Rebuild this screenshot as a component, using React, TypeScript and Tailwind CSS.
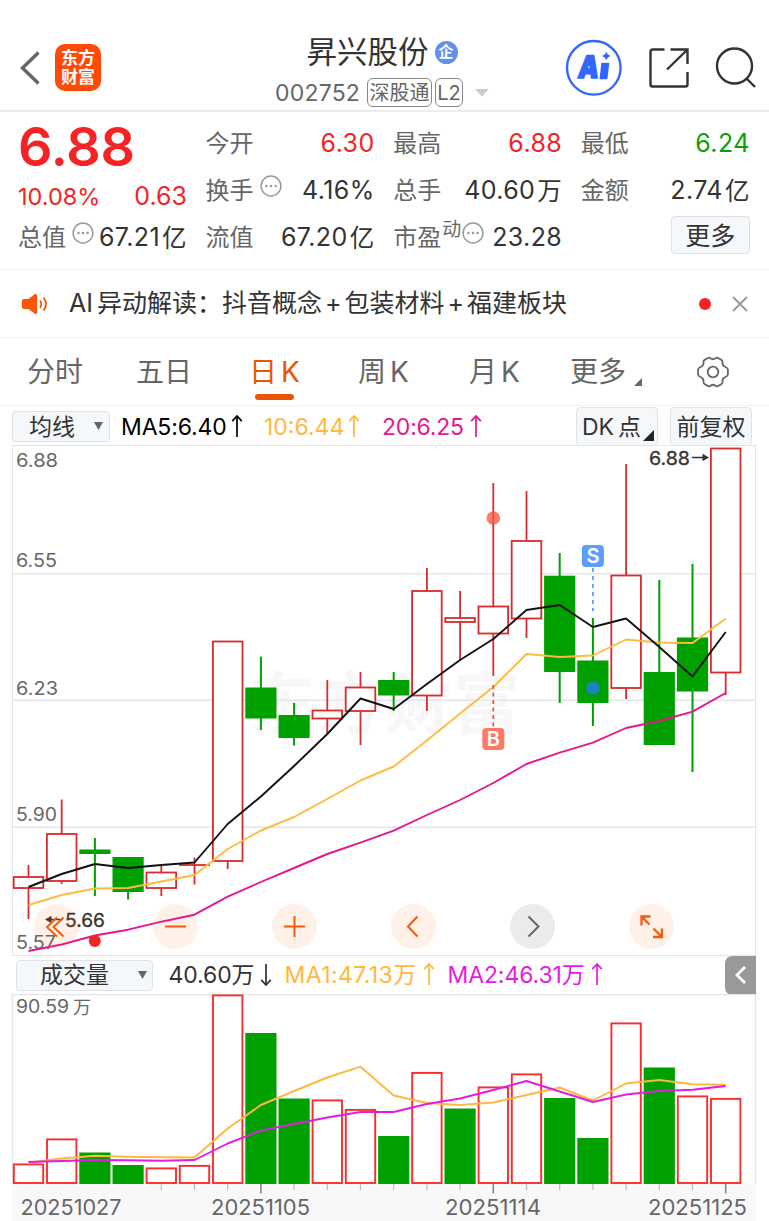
import type { ReactNode } from 'react'

type Candle = { top: number; bottom: number; high: number; low: number; up: boolean; vol: number; volUp: boolean }

const STEP = 33.2
const cx = (i: number) => 28.5 + STEP * i

// top / bottom of the body, high / low of the wick, up?, top of the volume bar, volume up?
const rows: [number, number, number, number, boolean, number, boolean][] = [
  [877, 888, 865, 919, true, 1164, true],
  [834, 881, 799.5, 884, true, 1139, true],
  [849.5, 854, 838, 896, false, 1152.5, false],
  [857, 892, 857, 899.5, false, 1165, false],
  [872.5, 888, 865, 896, true, 1168, true],
  [865, 865, 857.5, 884.5, true, 1165.5, true],
  [641.5, 861, 641.5, 869, true, 995, true],
  [687.5, 718.5, 656.7, 730, false, 1033, false],
  [715, 738, 703, 745.5, false, 1098.5, false],
  [710.5, 718.5, 680, 734, true, 1100, true],
  [687.5, 711, 672, 745, true, 1109.5, true],
  [680, 695.5, 672, 711, false, 1136, false],
  [591, 695.5, 568, 711, true, 1072.5, true],
  [618, 622, 591, 660, true, 1108.5, false],
  [606.5, 633.5, 483, 676, true, 1087, true],
  [541, 618.5, 491, 638, true, 1074, true],
  [575.7, 672, 553, 703, false, 1098, false],
  [660.5, 703, 618, 726, false, 1138, false],
  [575.5, 688, 464, 699, true, 1023, true],
  [672, 745, 580, 745, false, 1067.5, false],
  [637.5, 691.5, 564, 772, false, 1096, true],
  [448.5, 672.5, 448.5, 695, true, 1098.5, true],
]

const candles: Candle[] = rows.map(([top, bottom, high, low, up, vol, volUp]) => ({ top, bottom, high, low, up, vol, volUp }))

const ma5 = [887, 874, 864, 868, 865, 862.5, 824, 796.5, 766, 734, 698.5, 709, 684, 660, 639, 610, 605, 627, 618.5, 647, 676.5, 632]
const ma10 = [905, 895, 888.5, 888, 881.5, 875, 849, 830.5, 817, 799, 780.5, 766.5, 740.5, 713.5, 687, 654, 657, 655.5, 639.5, 642.5, 643, 618.5]
const ma20 = [951, 944.5, 935.5, 929.7, 921.7, 914.7, 896.7, 882, 868, 854, 842.7, 830.7, 815, 800, 783, 764, 752.7, 742.7, 728, 721, 711.7, 693]
const vma1 = [1162.5, 1158.5, 1155.7, 1156.7, 1157.2, 1157.5, 1128.5, 1105, 1091, 1077.5, 1066.7, 1095.5, 1103, 1105, 1102.5, 1095, 1087.5, 1100.5, 1083.5, 1080, 1084.3, 1084.7]
const vma2 = [1162, 1161, 1160, 1160.3, 1160.7, 1160, 1143.5, 1130.5, 1124, 1117.5, 1112, 1112, 1104, 1098.5, 1090, 1081, 1091.5, 1102, 1094.5, 1091, 1089.7, 1086]

const line = (ys: number[]) => ys.map((y, i) => `${cx(i)},${y}`).join(' ')

const Arrow = ({ down }: { down?: boolean }) => (
  <svg width="12" height="24" viewBox="0 0 12 24" fill="none" stroke="currentColor" strokeWidth="1.7" className={down ? 'rotate-180' : '-mt-[2px]'}>
    <path d="M6 23V2M1.2 7.2 6 2l4.8 5.2" />
  </svg>
)

const Dots = () => (
  <svg width="22" height="22" viewBox="0 0 22 22" className="shrink-0">
    <circle cx="11" cy="11" r="9.9" fill="none" stroke="#999" strokeWidth="1.5" />
    <circle cx="6.4" cy="11" r="1.3" fill="#999" />
    <circle cx="11" cy="11" r="1.3" fill="#999" />
    <circle cx="15.6" cy="11" r="1.3" fill="#999" />
  </svg>
)

const Header = () => (
  <header className="flex h-[112px] border-b-2 border-[#ebebeb]">
    <div className="flex w-[275px] pl-[20px] pt-[44px]">
      <svg width="21" height="36" viewBox="0 0 21 36" fill="none" stroke="#666" strokeWidth="3.4" className="mt-[6px]">
        <path d="M18.5 2.5 2.500 18l16 15.500" />
      </svg>
      <div className="ml-[14px] h-[47px] w-[46px] rounded-[10px] bg-[#ff4a05] pt-[5px] text-center text-[17px] font-bold leading-[19px] text-white">
        东方
        <br />
        财富
      </div>
    </div>
    <div className="w-[290px] pt-[32px]">
      <div className="flex h-[40px] items-center pl-[31.500px] text-[30.500px] leading-[40px] text-[#333]">
        昇兴股份
        <span className="ml-[6px] flex size-[23px] items-center justify-center rounded-full bg-[#628fea] text-[15px] font-bold text-white">企</span>
      </div>
      <div className="mt-[6px] flex h-[29px] items-center text-[#666]">
        <span className="mt-[2px] w-[92px] text-[23px] tracking-[0.2px]">002752</span>
        <span className="flex h-[29px] w-[65px] items-center justify-center rounded-[6px] border border-[#888] pt-[1px] text-[20px]">深股通</span>
        <span className="ml-[3px] flex h-[29px] w-[28px] items-center justify-center rounded-[6px] border border-[#888] pt-[1px] text-[20px]">L2</span>
        <svg width="14" height="8" viewBox="0 0 14 8" className="ml-[12px]">
          <path d="M0 0h14L7 7.5z" fill="#ccc" />
        </svg>
      </div>
    </div>
    <svg width="58" height="58" viewBox="0 0 58 58" className="mt-[39px]" fill="#3366ff">
      <circle cx="28.8" cy="28.8" r="26.8" fill="none" stroke="#3366ff" strokeWidth="2.400" />
      <text x="12.500" y="39" fontSize="31" fontWeight="900" fontFamily="Inter" textLength="20.500" lengthAdjust="spacingAndGlyphs" stroke="#3366ff" strokeWidth="1.600" strokeLinejoin="round" transform="translate(4.600 0) skewX(-7)">A</text>
      <path d="M37 24.500h6.500l-1.700 15h-6.500z" stroke="#3366ff" strokeWidth="1.400" strokeLinejoin="round" />
      <path d="M41.300 12.800l1.500 2.800 3 1.300-3 1.500-1.500 2.900-1.500-2.900-3-1.500 3-1.300z" />
    </svg>
    <svg width="42" height="42" viewBox="0 0 42 42" className="ml-[25px] mt-[47px]" fill="none" stroke="#333" strokeWidth="2.400">
      <path d="M16.500 2.500H4.500Q2.500 2.500 2.500 4.500V37.500Q2.500 39.500 4.500 39.500H37.500Q39.500 39.500 39.500 37.500V25M22.500 2.500H39.500V17M39 3 19 22.500" />
    </svg>
    <svg width="44" height="44" viewBox="0 0 44 44" className="ml-[25px] mt-[46px]" fill="none" stroke="#333" strokeWidth="2.400">
      <circle cx="19.500" cy="20" r="17.500" />
      <path d="M31 32 40 41" />
    </svg>
  </header>
)

const Stat = ({ label, color = 'text-[#333]', children }: { label: ReactNode; color?: string; children: ReactNode }) => (
  <div className="flex h-[47px] w-[169px] items-center justify-between pt-[1px]">
    <span className="flex items-center text-[24px] text-[#666]">{label}</span>
    <span className={`flex items-center gap-[2px] whitespace-nowrap text-[25px] tracking-[0.4px] ${color}`}>{children}</span>
  </div>
)

const Quote = () => (
  <section className="flex h-[157px] gap-[18.600px] pl-[18px] pt-[8px]">
    <div className="w-[169px]">
      <div className="h-[53px] whitespace-nowrap text-[54px] font-semibold leading-[54px] tracking-[-0.200px] text-[#f52323]">6.88</div>
      <div className="flex h-[41px] items-center justify-between pt-[6px] text-[#f52323]">
        <span className="text-[23.500px]">10.08%</span>
        <span className="text-[25px]">0.63</span>
      </div>
      <Stat label={<>总值<span className="-mt-[10px] ml-[6px]"><Dots /></span></>}>
        <span>67.21</span><span className="text-[24.500px]">亿</span>
      </Stat>
    </div>
    <div>
      <Stat label="今开" color="text-[#f52323]">6.30</Stat>
      <Stat label={<>换手<span className="-mt-[11px] ml-[6px]"><Dots /></span></>}>4.16%</Stat>
      <Stat label="流值"><span>67.20</span><span className="text-[24.500px]">亿</span></Stat>
    </div>
    <div>
      <Stat label="最高" color="text-[#f52323]">6.88</Stat>
      <Stat label="总手"><span>40.60</span><span className="text-[24.500px]">万</span></Stat>
      <Stat label={<>市盈<span className="-mt-[15px] ml-[1px] text-[19px]">动</span><span className="-mt-[10px] ml-[1px]"><Dots /></span></>}>23.28</Stat>
    </div>
    <div>
      <Stat label="最低" color="text-[#0a9f0a]">6.24</Stat>
      <Stat label="金额"><span>2.74</span><span className="text-[24.500px]">亿</span></Stat>
      <div className="flex justify-end pt-[2px]">
        <button className="h-[38px] w-[79px] rounded-[4px] border border-[#dcdfe4] bg-[#f5f8fa] pt-[1px] text-[25px] leading-[36px] text-[#333]">更多</button>
      </div>
    </div>
  </section>
)

const Notice = () => (
  <section className="flex h-[69px] items-center border-y border-[#f2f2f2] pl-[22px] text-[#333]">
    <svg width="26" height="22" viewBox="0 0 26 22" className="mr-[21px]">
      <path d="M2 6h4.500L12.500 1.200Q15 0 15 2.500v17Q15 22 12.500 20.500L6.500 16H2Q0 16 0 14V8Q0 6 2 6z" fill="#ff5500" />
      <path d="M18 7.500q2.500 3.500 0 7.500M21.500 4.500q5 6.500 0 13" fill="none" stroke="#ff5500" strokeWidth="1.800" />
    </svg>
    <span className="flex w-[625px] items-center whitespace-nowrap pt-[1px] text-[25px]">
      <span className="mr-[4px]">AI</span><span className="w-[125px]">异动解读：</span>抖音概念
      <span className="mx-[3px]">+</span>包装材料<span className="mx-[3px]">+</span>福建板块
    </span>
    <span className="ml-[5px] size-[12px] rounded-full bg-[#f52323]" />
    <svg width="16" height="16" viewBox="0 0 16 16" className="ml-[20.500px]" stroke="#999" strokeWidth="1.900">
      <path d="m1 1 14 14M15 1 1 15" />
    </svg>
  </section>
)

const Tabs = () => (
  <nav className="flex h-[68px] items-center border-b border-[#f0f0f0] pt-[1px] text-[28px] text-[#666]">
    <span className="ml-[27px] w-[109px]">分时</span>
    <span className="w-[113px]">五日</span>
    <span className="relative flex w-[109px] gap-[4px] text-[#ea5504]">
      日<span>K</span>
      <i className="absolute left-[6px] top-[43px] h-[6px] w-[39px] rounded-full bg-[#ea5504]" />
    </span>
    <span className="flex w-[111px] gap-[4px]">周<span>K</span></span>
    <span className="flex w-[101px] gap-[4px]">月<span>K</span></span>
    <span>更多</span>
    <svg width="8" height="8" viewBox="0 0 8 8" className="ml-[8px] mt-[20px]">
      <path d="M8 0v8H0z" fill="#666" />
    </svg>
    <svg width="34" height="32" viewBox="0 0 34 32" className="-mt-[1px] ml-[54px]" fill="none" stroke="#666" strokeWidth="1.800">
      <circle cx="17" cy="16" r="5.300" />
      <path d="M11.500 2.200Q13 1 14.500 2.300Q17 4.200 19.500 2.300Q21 1 22.500 2.200L25 3.600Q26.800 4.500 26.500 6.500Q26.200 9.800 29.500 11Q31.800 12 31.900 13.500V18.500Q31.800 20 29.500 21Q26.200 22.200 26.500 25.500Q26.800 27.500 25 28.400L22.500 29.800Q21 31 19.500 29.700Q17 27.800 14.500 29.700Q13 31 11.500 29.800L9 28.400Q7.200 27.500 7.500 25.500Q7.800 22.200 4.500 21Q2.200 20 2.100 18.500V13.500Q2.200 12 4.500 11Q7.800 9.800 7.500 6.500Q7.200 4.500 9 3.600z" />
    </svg>
  </nav>
)

const box = 'rounded-[4px] border border-[#dfe3e8] bg-[#f5f8fa] text-[#333]'

const MaBar = () => (
  <div className="flex h-[39px] items-start pl-[12px] text-[23px]">
    <div className={`${box} mt-[5px] flex h-[31px] w-[98px] shrink-0 items-center pl-[16px] pt-[1px]`}>
      均线
      <svg width="9" height="8" viewBox="0 0 9 8" className="-mt-[2px] ml-[19px]">
        <path d="M0 0h9L4.500 8z" fill="#666" />
      </svg>
    </div>
    <div className="mt-[3px] flex h-[35px] items-center whitespace-nowrap pt-[1px]">
      <span className="ml-[11px] w-[110px] tracking-[-0.150px] text-black">MA5:6.40</span>
      <Arrow />
      <span className="ml-[21px] flex w-[84px] text-[#ffb83d]">10:6.44</span>
      <span className="text-[#ffb83d]"><Arrow /></span>
      <span className="ml-[22px] w-[88px] tracking-[-0.200px] text-[#e5178f]">20:6.25</span>
      <span className="text-[#e5178f]"><Arrow /></span>
    </div>
    <div className={`${box} ml-auto mt-[1px] flex h-[39px] w-[82px] shrink-0 items-center pl-[5px] pt-[1px]`}>
      <span className="mr-[4px]">DK</span>点
      <svg width="11" height="11" viewBox="0 0 11 11" className="ml-[2px] mt-[17px] shrink-0">
        <path d="M11 0v11H0z" fill="#222" />
      </svg>
    </div>
    <div className={`${box} ml-[12px] mr-[17px] mt-[1px] h-[39px] w-[82px] shrink-0 whitespace-nowrap pt-[1px] text-center leading-[37px]`}>前复权</div>
  </div>
)

const Label = ({ x, y, w, children, fill = '#666', size = 18 }: { x: number; y: number; w: number; children: string; fill?: string; size?: number }) => (
  <text x={x} y={y} fontSize={size} fill={fill} textLength={w} lengthAdjust="spacingAndGlyphs">{children}</text>
)

const PriceChart = () => (
  <svg width="769" height="511" viewBox="0 445 769 511" className="block">
    <rect x="12.500" y="445.500" width="743" height="510" fill="#fff" stroke="#e3e5ea" />
    <text x="248" y="728" fontSize="67" fontWeight="700" fill="#f7f7f7" textLength="272">东方财富</text>
    {[573.7, 700.3, 827.3].map((y) => (
      <line key={y} x1="12" x2="756" y1={y} y2={y} stroke="#e3e6ef" strokeWidth="1.600" />
    ))}
    <Label x={16} y={466.500} w={42}>6.88</Label>
    <Label x={16} y={566.800} w={41}>6.55</Label>
    <Label x={16} y={694.500} w={42}>6.23</Label>
    <Label x={16} y={821} w={41}>5.90</Label>
    <Label x={16} y={948.500} w={40}>5.57</Label>
    {candles.map((c, i) =>
      c.up ? (
        <g key={i} stroke="#d92b2e" strokeWidth="1.800">
          <line x1={cx(i)} x2={cx(i)} y1={c.high} y2={c.low} />
          {c.bottom > c.top ? (
            <rect x={cx(i) - 14.800} y={c.top} width="29.600" height={c.bottom - c.top} fill="#fff" />
          ) : (
            <line x1={cx(i) - 15.500} x2={cx(i) + 15.500} y1={c.top} y2={c.top} />
          )}
        </g>
      ) : (
        <g key={i} fill="#00a000">
          <rect x={cx(i) - 1} y={c.high} width="2" height={c.low - c.high} />
          <rect x={cx(i) - 15.600} y={c.top} width="31.200" height={c.bottom - c.top} />
        </g>
      )
    )}
    <circle cx={cx(14)} cy="518" r="6.800" fill="#ff7a68" />
    <line x1={cx(14)} x2={cx(14)} y1="511" y2="525" stroke="#e0483f" strokeWidth="1.600" />
    <circle cx={cx(17)} cy="688" r="6.800" fill="#1c86b8" />
    <g fill="none" strokeWidth="1.900" strokeLinejoin="round">
      <polyline points={line(ma20)} stroke="#e5178f" />
      <polyline points={line(ma10)} stroke="#ffbb3f" />
      <polyline points={line(ma5)} stroke="#111" />
    </g>
    <line x1={cx(17)} x2={cx(17)} y1="568" y2="611" stroke="#5c9dfb" strokeWidth="1.800" strokeDasharray="4 4" />
    <line x1={cx(14)} x2={cx(14)} y1="685" y2="727" stroke="#f5443f" strokeWidth="1.600" strokeDasharray="4 3.500" />
    <rect x={cx(17) - 11} y="545" width="22" height="22" rx="4" fill="#5c9dfb" />
    <rect x={cx(14) - 11} y="728" width="22" height="22" rx="4" fill="#ff7866" />
    <g fill="#fff" fontSize="20" fontWeight="600" textAnchor="middle">
      <text x={cx(17)} y="563.300">S</text>
      <text x={cx(14)} y="746.300">B</text>
    </g>
    <g stroke="#333" strokeWidth="0.300">
      <Label x={649} y={464.500} w={41} fill="#333" size={18.500}>6.88</Label>
      <Label x={65} y={927} w={40} fill="#333" size={19}>5.66</Label>
    </g>
    <path d="M692 457.500h12M50 919.500h13" stroke="#333" strokeWidth="1.600" />
    <path d="M709 457.500l-6.500-3.700v7.400zM45 919.500l6.500-3.700v7.400z" fill="#333" />
    <circle cx="94.800" cy="941" r="6" fill="#f52323" />
  </svg>
)

const tools: { d: string; w: number; off?: boolean }[] = [
  { d: 'M23 13.500 13 23 23 32.500M29.500 13.500 19.500 23 29.500 32.500', w: 1.900 },
  { d: 'M12 22.500h21', w: 2 },
  { d: 'M12 22.500h21M22.500 12v21', w: 2 },
  { d: 'M26.500 12.500 17 22.500l9.500 10', w: 2 },
  { d: 'M18.500 12.500 28.500 22.500l-10 10', w: 2, off: true },
  { d: 'M12.500 21.500v-9h9M13 13l7.500 7.500M33 24.500v8.500H24M32.500 32.500l-8-8', w: 2.300 },
]

const Tools = () => (
  <div className="absolute left-[33.500px] top-[459px] flex gap-[74.100px]">
    {tools.map((t, i) => (
      <button key={i} className={`size-[45px] rounded-full ${t.off ? 'bg-[#999]/20' : 'bg-[#ff6a1a]/10'}`}>
        <svg width="45" height="45" viewBox="0 0 45 45" fill="none" stroke={t.off ? '#666' : '#f05a0c'} strokeWidth={t.w}>
          <path d={t.d} />
        </svg>
      </button>
    ))}
  </div>
)

const VolBar = () => (
  <div className="flex h-[38px] items-center whitespace-nowrap pl-[16px] text-[23px]">
    <div className={`${box} flex h-[31px] w-[137px] shrink-0 items-center pl-[23px] pt-[1px]`}>
      成交量
      <svg width="9" height="8" viewBox="0 0 9 8" className="-mt-[2px] ml-[29px]">
        <path d="M0 0h9L4.500 8z" fill="#666" />
      </svg>
    </div>
    <span className="ml-[15.500px] w-[91px] pt-[1px] tracking-[-0.100px] text-[#333]">40.60万</span>
    <span className="text-[#333]"><Arrow down /></span>
    <span className="ml-[13px] w-[138px] pt-[1px] tracking-[0.400px] text-[#ffb83d]">MA1:47.13万</span>
    <span className="text-[#ffb83d]"><Arrow /></span>
    <span className="ml-[13px] w-[143px] pt-[1px] tracking-[-0.100px] text-[#e41be4]">MA2:46.31万</span>
    <span className="text-[#e41be4]"><Arrow /></span>
    <button className="ml-auto mr-[13px] flex h-[39px] w-[31px] items-center justify-center rounded-l-[7px] bg-[#999]">
      <svg width="12" height="18" viewBox="0 0 12 18" fill="none" stroke="#fff" strokeWidth="2.800">
        <path d="M10 1 2 9l8 8" />
      </svg>
    </button>
  </div>
)

const VolumeChart = () => (
  <svg width="769" height="227" viewBox="0 994 769 227" className="block">
    <path d="M12.500 1184V994.500H755.500V1184" fill="none" stroke="#e3e5ea" strokeWidth="1.300" />
    <rect x="12" y="1184" width="744" height="37" fill="#f8f8fb" />
    <Label x={16} y={1013} w={53}>90.59</Label>
    <Label x={73} y={1013.500} w={18}>万</Label>
    {candles.map((c, i) =>
      c.volUp ? (
        <rect key={i} x={cx(i) - 14.700} y={c.vol + 0.400} width="29.400" height={1182.600 - c.vol} fill="#fff" stroke="#fa2d2d" strokeWidth="1.900" />
      ) : (
        <rect key={i} x={cx(i) - 15.600} y={c.vol} width="31.200" height={1184 - c.vol} fill="#00a000" />
      )
    )}
    <g fill="none" strokeWidth="1.900" strokeLinejoin="round">
      <polyline points={line(vma1)} stroke="#ffb83d" />
      <polyline points={line(vma2)} stroke="#e41be4" />
    </g>
    {candles.map((_, i) =>
      i < 4 ? null : (
        <line key={i} x1={cx(i)} x2={cx(i)} y1="1184" y2={i % 7 === 0 ? 1193.500 : 1190} stroke={i % 7 === 0 ? '#888' : '#bbb'} strokeWidth={i % 7 === 0 ? 1.600 : 1.200} />
      )
    )}
    <Label x={20.500} y={1214.500} w={101} size={21}>20251027</Label>
    <Label x={211} y={1214.500} w={99} size={21}>20251105</Label>
    <Label x={445} y={1214.500} w={96} size={21}>20251114</Label>
    <Label x={648} y={1214.500} w={99} size={21}>20251125</Label>
  </svg>
)

const App = () => {
  return (
    <div className="h-[1221px] w-[769px] overflow-hidden bg-white font-['Inter','Noto_Sans_CJK_SC',sans-serif]">
      <Header />
      <Quote />
      <Notice />
      <Tabs />
      <MaBar />
      <div className="relative">
        <PriceChart />
        <Tools />
      </div>
      <VolBar />
      <VolumeChart />
    </div>
  )
}

export default App
